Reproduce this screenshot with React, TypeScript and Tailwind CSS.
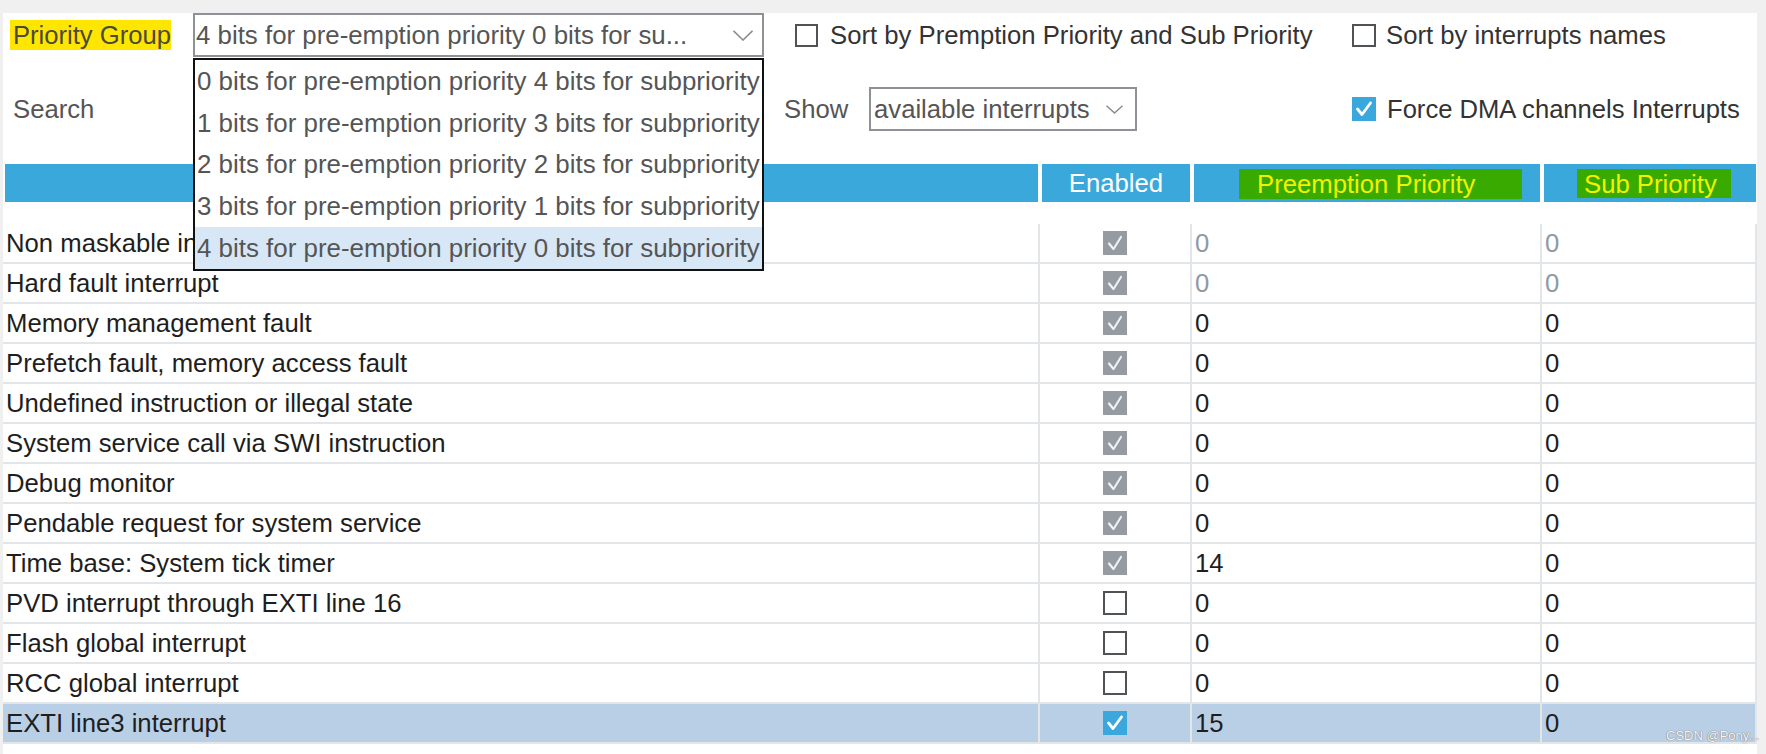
import React from "react";

type Kind = "gray" | "off" | "blue";
type Row = { name: string; kind: Kind; pre: string; sub: string; dim?: boolean; sel?: boolean };

const rows: Row[] = [
  { name: "Non maskable interrupt", kind: "gray", pre: "0", sub: "0", dim: true },
  { name: "Hard fault interrupt", kind: "gray", pre: "0", sub: "0", dim: true },
  { name: "Memory management fault", kind: "gray", pre: "0", sub: "0" },
  { name: "Prefetch fault, memory access fault", kind: "gray", pre: "0", sub: "0" },
  { name: "Undefined instruction or illegal state", kind: "gray", pre: "0", sub: "0" },
  { name: "System service call via SWI instruction", kind: "gray", pre: "0", sub: "0" },
  { name: "Debug monitor", kind: "gray", pre: "0", sub: "0" },
  { name: "Pendable request for system service", kind: "gray", pre: "0", sub: "0" },
  { name: "Time base: System tick timer", kind: "gray", pre: "14", sub: "0" },
  { name: "PVD interrupt through EXTI line 16", kind: "off", pre: "0", sub: "0" },
  { name: "Flash global interrupt", kind: "off", pre: "0", sub: "0" },
  { name: "RCC global interrupt", kind: "off", pre: "0", sub: "0" },
  { name: "EXTI line3 interrupt", kind: "blue", pre: "15", sub: "0", sel: true },
];

const options = [
  "0 bits for pre-emption priority 4 bits for subpriority",
  "1 bits for pre-emption priority 3 bits for subpriority",
  "2 bits for pre-emption priority 2 bits for subpriority",
  "3 bits for pre-emption priority 1 bits for subpriority",
  "4 bits for pre-emption priority 0 bits for subpriority",
];

function Check({ kind }: { kind: Kind }) {
  if (kind === "off") {
    return <div className="w-[24px] h-[24px] border-2 border-[#505355] bg-white" />;
  }
  if (kind === "blue") {
    return (
      <div className="w-[24px] h-[24px] bg-[#3aa8dc] flex items-center justify-center">
        <svg width="24" height="24" viewBox="0 0 24 24">
          <polyline points="5.5,12 10,17.5 18.5,6" fill="none" stroke="#ffffff" strokeWidth="2.8" strokeLinecap="round" strokeLinejoin="round" />
        </svg>
      </div>
    );
  }
  return (
    <div className="w-[24px] h-[24px] bg-[#959ba0] flex items-center justify-center">
      <svg width="24" height="24" viewBox="0 0 24 24">
        <polyline points="6,12.5 10.5,18 18,6" fill="none" stroke="#eef1f4" strokeWidth="2.2" strokeLinecap="round" strokeLinejoin="round" />
      </svg>
    </div>
  );
}

export default function App() {
  return (
    <div
      className="relative w-[1766px] h-[754px] bg-[#f0f0f0] pt-[2px] pl-[3px] pr-[9px] overflow-hidden text-[25.7px] leading-[30px]"
      style={{ fontFamily: '"Liberation Sans", Arial, sans-serif' }}
    >
      <div className="bg-white w-[1754px] h-[752px]">
        {/* Row 1 */}
        <div className="flex items-center h-[44px] mt-[11px] whitespace-nowrap">
          <div className="ml-[7px] w-[161px] h-[30px] bg-[#ffe600] pl-[3px] flex items-center text-[#4a4a3e] overflow-visible text-[25.6px]">
            Priority Group
          </div>
          <div className="ml-[22px] w-[571px] h-[44px] border-2 border-[#8e9296] flex items-center pl-[1px] text-[#555555] text-[25.85px]">
            <span>4 bits for pre-emption priority 0 bits for su...</span>
            <svg className="ml-auto mr-[9px]" width="20" height="11" viewBox="0 0 20 11">
              <polyline points="0.5,0.8 10,10 19.5,0.8" fill="none" stroke="#8a8d90" strokeWidth="1.6" />
            </svg>
          </div>
          <div className="ml-[31px] w-[557px] flex items-center">
            <div className="w-[23px] h-[23px] border-2 border-[#505355] bg-white" />
            <span className="ml-[12px] text-[#333333]">Sort by Premption Priority and Sub Priority</span>
          </div>
          <div className="flex items-center">
            <div className="w-[24px] h-[23px] border-2 border-[#505355] bg-white" />
            <span className="ml-[10px] text-[#333333]">Sort by interrupts names</span>
          </div>
        </div>

        {/* Row 2 */}
        <div className="flex items-center h-[44px] mt-[30px] whitespace-nowrap">
          <span className="ml-[10px] w-[771px] text-[#555555]">Search</span>
          <span className="w-[85px] text-[#555555]">Show</span>
          <div className="w-[268px] h-[44px] border-2 border-[#8e9296] flex items-center pl-[3px] text-[#555555]">
            <span>available interrupts</span>
            <svg className="ml-auto mr-[12px]" width="17" height="9" viewBox="0 0 17 9">
              <polyline points="0.5,0.8 8.5,8 16.5,0.8" fill="none" stroke="#8a8d90" strokeWidth="1.5" />
            </svg>
          </div>
          <div className="ml-[215px] flex items-center">
            <Check kind="blue" />
            <span className="ml-[11px] text-[#333333] text-[25.6px]">Force DMA channels Interrupts</span>
          </div>
        </div>

        {/* Header */}
        <div className="flex h-[38px] ml-[2px] mt-[33px] gap-[4px] whitespace-nowrap">
          <div className="w-[1033px] bg-[#3aa8db]" />
          <div className="w-[148px] bg-[#3aa8db] flex items-center justify-center text-white">Enabled</div>
          <div className="w-[346px] bg-[#3aa8db] pl-[45px] pt-[5px]">
            <div className="w-[283px] h-[30px] bg-[#38aa00] pl-[18px] flex items-center text-[#f2f200]">
              Preemption Priority
            </div>
          </div>
          <div className="w-[212px] bg-[#3aa8db] pl-[33px] pt-[5px]">
            <div className="w-[154px] h-[29px] bg-[#38aa00] pl-[7px] flex items-center text-[#f2f200]">
              Sub Priority
            </div>
          </div>
        </div>

        {/* Body */}
        <div className="mt-[22px] whitespace-nowrap">
          {rows.map((r) => (
            <div
              key={r.name}
              className={`flex h-[40px] border-b-2 border-[#e3e6e9] ${r.sel ? "bg-[#b9cfe6]" : "bg-white"}`}
            >
              <div className="w-[1037px] border-r-2 border-[#e3e6e9] pl-[3px] flex items-center text-[#1e1e1e]">
                {r.name}
              </div>
              <div className="w-[152px] border-r-2 border-[#e3e6e9] flex items-center justify-center">
                <Check kind={r.kind} />
              </div>
              <div
                className={`w-[350px] border-r-2 border-[#e3e6e9] pl-[3px] flex items-center ${r.dim ? "text-[#8e99a4]" : "text-[#1e1e1e]"}`}
              >
                {r.pre}
              </div>
              <div
                className={`w-[215px] border-r-2 border-[#e3e6e9] pl-[3px] flex items-center ${r.dim ? "text-[#8e99a4]" : "text-[#1e1e1e]"}`}
              >
                {r.sub}
              </div>
            </div>
          ))}
        </div>
      </div>

      {/* Open dropdown list */}
      <div className="absolute left-[193px] top-[58px] w-[571px] h-[213px] border-2 border-[#111111] bg-white whitespace-nowrap overflow-hidden text-[25.9px]">
        {options.map((o, i) => (
          <div
            key={o}
            className={`h-[41.8px] flex items-center pl-[2px] text-[#555555] ${i === 4 ? "bg-[#d7e7f5]" : ""}`}
          >
            {o}
          </div>
        ))}
      </div>

      {/* Watermark */}
      <div className="absolute left-[1666px] top-[728px] text-[13px] leading-[16px] text-[#f6f6f6] [text-shadow:0_0_1px_#7a7a7a,0_0_1px_#7a7a7a] whitespace-nowrap">
        CSDN @Pony...
      </div>
    </div>
  );
}
